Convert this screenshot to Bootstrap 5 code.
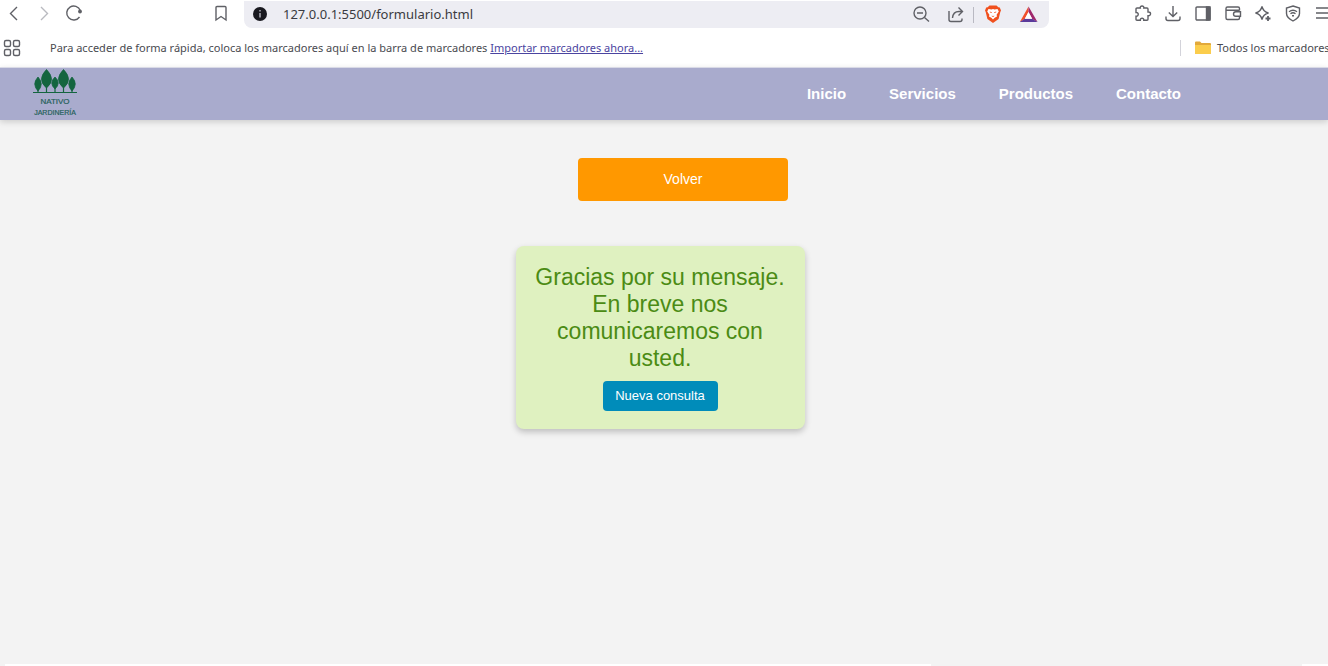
<!DOCTYPE html>
<html lang="es">
<head>
<meta charset="utf-8">
<meta name="viewport" content="width=device-width, initial-scale=1">
<title>Nativo Jardinería</title>
<link href="https://cdn.jsdelivr.net/npm/bootstrap@5.3.0/dist/css/bootstrap.min.css" rel="stylesheet">
<style>
  body { background: #f3f3f3; font-family: "Liberation Sans", Arial, sans-serif; }
  svg { display: block; flex: none; }
  .chrome { background: #fff; color: #494a50; font-family: "Noto Sans", sans-serif; }
  .ico { border: 0; background: none; padding: 0; width: 20px; height: 20px; color: #5f6066; flex: none; }
  .ico-off { color: #b9bac0; }
  .ico svg { width: 20px; height: 20px; fill: none; stroke: currentColor; stroke-width: 1.4; }
  .toolbar { height: 28px; padding-left: 4px; margin-right: -5px; }
  .tools { gap: 10px; }
  .mark-page { margin-left: 127px; margin-right: 13px; }
  .urlbar { background: #ededf3; border-radius: 0 0 8px 8px; height: 28px; border-top: 1px solid #fff; padding: 0 10px 0 6px; margin-right: 84px; }
  .urlbar input { border: 0; background: none; outline: 0; padding: 0; min-width: 0; margin-left: 13px; font-size: 13px; color: #3a3b41; }
  .rule { width: 1px; height: 16px; background: #b9b9c2; }
  .urlbar .rule { margin: 0 9px 0 6px; }
  .bookbar .rule { background: #d3d3da; margin-right: 14px; }
  .folder { margin-right: 6px; }
  .bookbar { height: 39px; font-size: 11px; line-height: 16px; padding-left: 2px; }
  .bookbar a { color: #4b44a0; }
  .hint { margin-left: 28px; }
  .allmarks { width: 148px; }
  .site-head { background: #a9abcd; height: 53px; border-top: 1px solid #d9dae6; box-shadow: 0 2px 6px rgba(0,0,0,.16); padding-left: 32px; padding-right: 147px; }
  .site-head .menu { gap: 43px; }
  .menu a { color: #fff; font-weight: 700; font-size: 15px; line-height: 20px; text-decoration: none; }
  main { padding: 38px 8px 38px 0; }
  .back-btn { width: 210px; height: 43px; margin-left: 46px; margin-bottom: 45px; border: 0; border-radius: 4px; background: #ff9800; color: #fff; font-size: 14px; }
  .thanks { width: 289px; padding: 18px 16px; border-radius: 8px; background: #dff1c0; color: #4b8b14; box-shadow: 0 3px 6px rgba(0,0,0,.22); }
  .thanks h1 { font-size: 23px; line-height: 27px; font-weight: 400; margin-bottom: 9px; }
  .again { width: 115px; height: 30px; border: 0; border-radius: 4px; background: #008cba; color: #fff; font-size: 13px; padding: 0; }
  .edge { height: 2px; padding-left: 5px; background: #f3f3f3; }
  .edge span { background: #fff; }
</style>
</head>
<body class="d-flex flex-column min-vh-100 overflow-x-hidden">
<div class="chrome overflow-hidden">
  <div class="toolbar d-flex align-items-center">
    <div class="d-flex tools">
      <button class="ico" aria-label="Atrás"><svg viewBox="0 0 20 20"><path d="M13 3 6.500 9.500 13 16"/></svg></button>
      <button class="ico ico-off" aria-label="Adelante"><svg viewBox="0 0 20 20"><path d="M7 3 13.500 9.500 7 16"/></svg></button>
      <button class="ico" aria-label="Recargar"><svg viewBox="0 0 20 20"><path d="M15.500 13A7 7 0 1 1 16.300 6.500"/><circle cx="16" cy="7.500" r="1.900" fill="currentColor" stroke="none"/></svg></button>
    </div>
    <button class="ico mark-page" aria-label="Marcador"><svg viewBox="0 0 20 20"><path d="M6 2.500h8q1 0 1 1V16l-5-3.500L5 16V3.500q0-1 1-1z"/></svg></button>
    <div class="urlbar d-flex align-items-center flex-fill">
      <button class="ico" aria-label="Información del sitio"><svg viewBox="0 0 20 20"><circle cx="10" cy="9" r="7" fill="#1a1a20" stroke="none"/><path d="M10 8v4.500M10 5v1.600" stroke="#b0b0b8" stroke-width="1.500"/></svg></button>
      <input class="flex-fill" type="text" aria-label="Dirección" value="127.0.0.1:5500/formulario.html">
      <button class="ico" aria-label="Zoom"><svg viewBox="0 0 20 20"><circle cx="9" cy="8" r="6"/><path d="M13.500 12.500l4.500 4M6 8h6"/></svg></button>
      <button class="ico ms-3" aria-label="Compartir"><svg viewBox="0 0 20 20"><path d="M2 6v8.500q0 2 2 2h9q2 0 2-2v-1M11.500 2.500l4 4-4 4M15.500 6.500H12q-6 0-6.500 6.500"/></svg></button>
      <span class="rule"></span>
      <button class="ico" aria-label="Brave Shields"><svg viewBox="0 0 20 20"><path d="M6.500.5h7l1.800 1.700 1.500.2 1.200 3-.7 1.600-1.700 7L10 18l-5.600-4L2.700 7 2 5.400l1.200-3 1.500-.2z" fill="#f0501e" stroke="none"/><path d="M5.500 4l3 .6L10 4l1.500.6 3-.6 1.300 2.500-2.200 3.300.4 1.800-2.300 1.200L10 14.600l-1.700-1.800L6 11.600l.4-1.800-2.200-3.300z" fill="#fff" stroke="none"/><path d="M6.800 7l2 .6M13.200 7l-2 .6M8.800 11l1.200.6 1.200-.6" stroke="#f0501e" stroke-width=".8"/></svg></button>
      <button class="ico ms-3" aria-label="Recompensas"><svg viewBox="0 0 20 20"><g stroke="none"><path d="M9.500 1.500.800 17l5-3 3.700-7z" fill="#f0502c"/><path d="M9.500 1.500 18.500 17l-5.300-3L9.500 7z" fill="#a0286c"/><path d="M.8 17h17.700l-5.300-3.200H5.800z" fill="#5b3a9b"/><path d="M9.500 7 5.800 13.800h7.400z" fill="#fff"/></g></svg></button>
    </div>
    <div class="d-flex tools">
      <button class="ico" aria-label="Extensiones"><svg viewBox="0 0 20 20"><path d="M4 4h3.300C6.600 1.300 11.500 1.300 10.800 4H14q1 0 1 1v3c3.400-.6 3.400 4.200 0 3.700v3.500q0 1-1 1h-3.200c.5-2.700-4-2.700-3.500 0H4q-1 0-1-1v-3c3 .4 3-4.200 0-3.700V5q0-1 1-1z"/></svg></button>
      <button class="ico" aria-label="Descargas"><svg viewBox="0 0 20 20"><path d="M10 2v10.500M5.800 8.500l4.200 4 4.200-4M3 12.500v2q0 2 2 2h10q2 0 2-2v-2"/></svg></button>
      <button class="ico" aria-label="Panel lateral"><svg viewBox="0 0 20 20"><rect x="3" y="3" width="14" height="13" rx="1"/><path d="M13.500 3H17v13h-3.500z" fill="currentColor"/></svg></button>
      <button class="ico" aria-label="Cartera"><svg viewBox="0 0 20 20"><path d="M16.500 6.500v-2Q16.500 3 15 3H4.500Q3 3 3 4.500V14q0 1.500 1.500 1.500H15q1.500 0 1.500-1.500v-1.500M3 6.300h13.500M17.500 7.700v4.600h-4.700a2.300 2.300 0 0 1 0-4.600z"/></svg></button>
      <button class="ico" aria-label="Leo"><svg viewBox="0 0 20 20"><path d="M9 2.500q1.200 5.300 6.500 6.500Q10.200 10.200 9 15.500 7.800 10.200 2.500 9 7.800 7.800 9 2.500z"/><path d="M15 12v5M12.500 14.500h5" stroke-width="1.800"/></svg></button>
      <button class="ico" aria-label="VPN"><svg viewBox="0 0 20 20"><path d="M10 2l6.500 2v5.500c0 3.500-3 5.700-6.500 7.500-3.500-1.800-6.500-4-6.500-7.500V4z"/><path d="M6 7.700q4-3 8 0M7.500 9.800q2.500-2 5 0M9 11.700h2"/></svg></button>
      <button class="ico" aria-label="Menú"><svg viewBox="0 0 20 20"><path d="M3 4h14M3 9h14M3 14h14"/></svg></button>
    </div>
  </div>
  <div class="bookbar d-flex align-items-center">
    <button class="ico" aria-label="Aplicaciones"><svg viewBox="0 0 20 20"><g><rect x="2.500" y="2.500" width="6" height="6" rx="1.500"/><rect x="11.500" y="2.500" width="6" height="6" rx="1.500"/><rect x="2.500" y="11.500" width="6" height="6" rx="1.500"/><rect x="11.500" y="11.500" width="6" height="6" rx="1.500"/></g></svg></button>
    <span class="hint text-nowrap">Para acceder de forma rápida, coloca los marcadores aquí en la barra de marcadores <a href="#">Importar marcadores ahora...</a></span>
    <div class="allmarks d-flex align-items-center ms-auto flex-shrink-0 text-nowrap">
      <span class="rule flex-shrink-0"></span>
      <svg width="16" height="14" viewBox="0 0 16 14" class="folder"><path d="M0 1.500Q0 .5 1 .5h4L6.500 2H15q1 0 1 1v9q0 1-1 1H1q-1 0-1-1z" fill="#e2a93b"/><path d="M0 4h16v8q0 1-1 1H1q-1 0-1-1z" fill="#fbcd4c"/></svg>
      <span>Todos los marcadores</span>
    </div>
  </div>
</div>

<header class="site-head d-flex align-items-center justify-content-between">
  <a href="#" aria-label="Nativo Jardinería">
    <svg width="46" height="50" viewBox="0 0 46 50" fill="#14653f">
      <g><path d="M6 8q6.500 7 0 14-6.500-7 0-14zM14.500 .5q10 10 0 18.500-10-8.500 0-18.500zM23 8q6.500 6 0 12-6.500-6 0-12zM31.500 .5q10 10 0 18.500-10-8.500 0-18.500zM40 8q6.500 7 0 14-6.500-7 0-14z" stroke="#14653f" stroke-width=".8"/>
      <path d="M6 20v3M14.500 18v5M23 19v4M31.500 18v5M40 20v3M1 23.500h44" stroke="#14653f" stroke-width="1.200"/></g>
      <text x="23" y="35" text-anchor="middle" font-size="8" fill="#245f58" stroke="#245f58" stroke-width=".2">NATIVO</text>
      <text x="23" y="46" text-anchor="middle" font-size="7" fill="#245f58" stroke="#245f58" stroke-width=".2">JARDINERÍA</text>
    </svg>
  </a>
  <nav class="menu d-flex">
    <a href="#">Inicio</a><a href="#">Servicios</a><a href="#">Productos</a><a href="#">Contacto</a>
  </nav>
</header>

<main class="d-flex flex-column align-items-center flex-fill">
  <button class="back-btn" type="button">Volver</button>
  <section class="thanks text-center">
    <h1>Gracias por su mensaje. En breve nos comunicaremos con usted.</h1>
    <button class="again" type="button">Nueva consulta</button>
  </section>
</main>
<div class="edge d-flex justify-content-between"><span style="width:70%"></span><span style="width:2%"></span></div>
<script src="https://cdn.jsdelivr.net/npm/bootstrap@5.3.0/dist/js/bootstrap.bundle.min.js"></script>
</body>
</html>
